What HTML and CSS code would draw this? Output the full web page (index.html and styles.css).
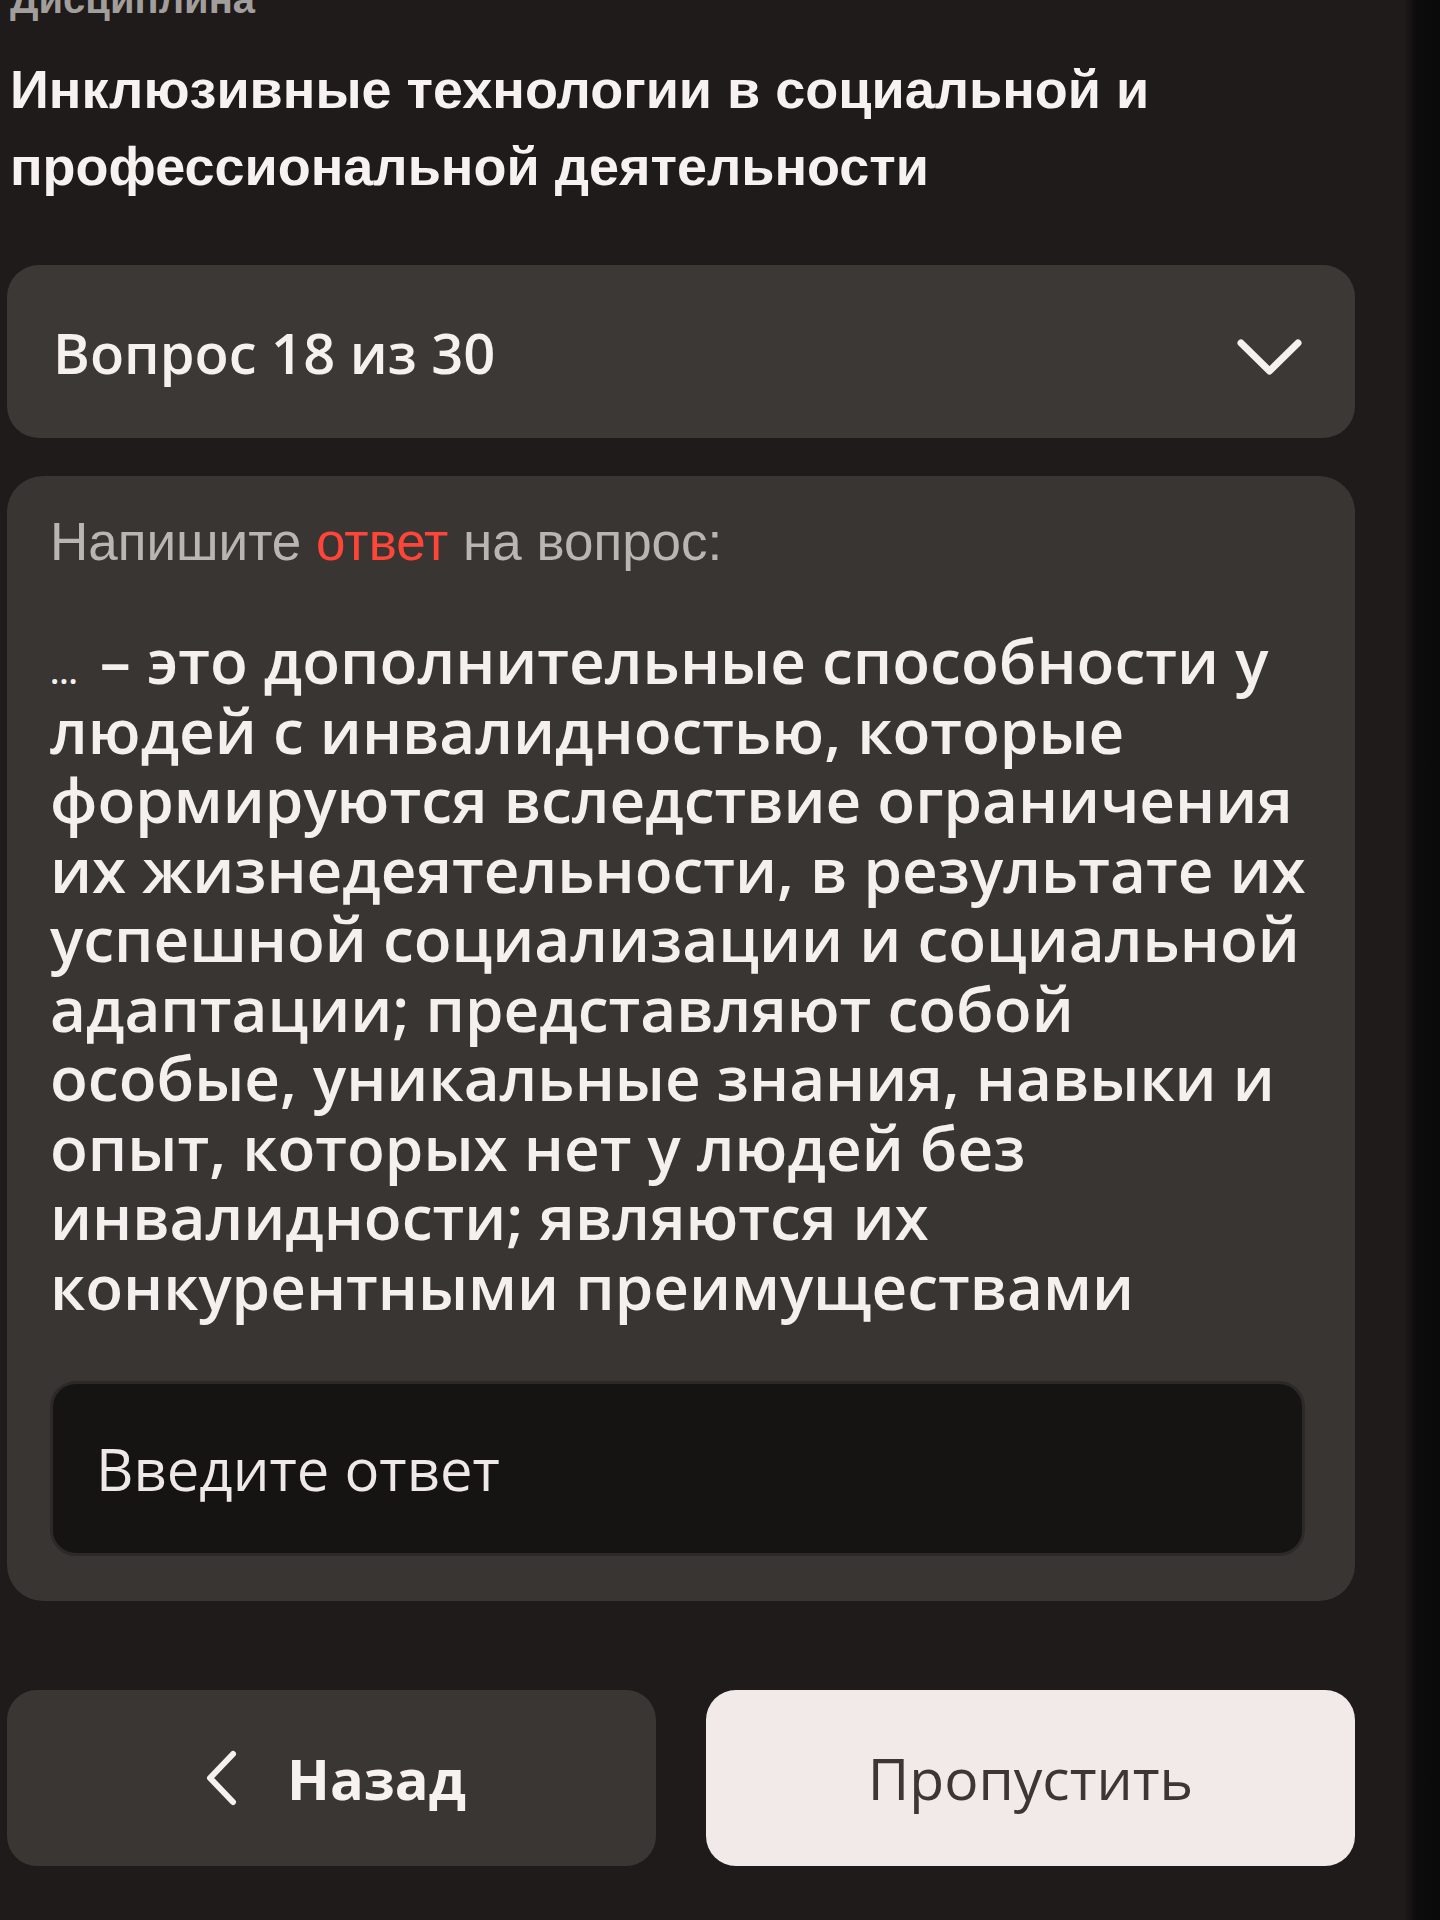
FILE: index.html
```html
<!DOCTYPE html>
<html lang="ru">
<head>
<meta charset="utf-8">
<title>Вопрос 18 из 30</title>
<link rel="stylesheet" href="styles.css">
</head>
<body>
<main class="page">
  <div class="label">Дисциплина</div>
  <h1 class="title">Инклюзивные технологии в социальной и<br>профессиональной деятельности</h1>

  <button class="question-select" type="button">
    <span class="question-select__text">Вопрос 18 из 30</span>
    <svg class="question-select__icon" width="67" height="38" viewBox="0 0 67 38" aria-hidden="true">
      <path d="M5 5 L33.5 33 L62 5" fill="none" stroke="#f6f1ef" stroke-width="7" stroke-linecap="round" stroke-linejoin="round"/>
    </svg>
  </button>

  <section class="card">
    <p class="hint">Напишите <span class="hint__accent">ответ</span> на вопрос:</p>
    <p class="question"><span class="question__gap">…</span> – это дополнительные способности у<br>людей с инвалидностью, которые<br>формируются вследствие ограничения<br>их жизнедеятельности, в результате их<br>успешной социализации и социальной<br>адаптации; представляют собой<br>особые, уникальные знания, навыки и<br>опыт, которых нет у людей без<br>инвалидности; являются их<br>конкурентными преимуществами</p>
    <input class="answer" type="text" placeholder="Введите ответ">
  </section>

  <div class="actions">
    <button class="btn btn--back" type="button">
      <svg class="btn__icon" width="32" height="56" viewBox="0 0 32 56" aria-hidden="true">
        <path d="M28 4 L5 28 L28 52" fill="none" stroke="#f6f1ef" stroke-width="6" stroke-linecap="round" stroke-linejoin="round"/>
      </svg>
      <span>Назад</span>
    </button>
    <button class="btn btn--skip" type="button">Пропустить</button>
  </div>
</main>
</body>
</html>
```

FILE: styles.css
```css
* {
  box-sizing: border-box;
}

html,
body {
  margin: 0;
  padding: 0;
}

body {
  min-height: 1920px;
  background: linear-gradient(to right, #1e1b1a 0, #1e1b1a 1404px, #0d0c0c 1416px, #0b0a0a 100%);
  color: #f5f0ee;
  font-family: "Open Sans", "Liberation Sans", sans-serif;
  overflow: hidden;
}

.page {
  width: 1348px;
  margin-left: 7px;
  display: flex;
  flex-direction: column;
}

.label {
  margin: -21px 0 0 3px;
  height: 40px;
  font-family: "Liberation Sans", Arial, sans-serif;
  font-weight: 700;
  font-size: 40px;
  line-height: 40px;
  color: #a29e9b;
}

.title {
  margin: 32px 0 0 3px;
  font-family: "Liberation Sans", Arial, sans-serif;
  font-weight: 700;
  font-size: 54px;
  line-height: 77px;
  color: #f7f2f0;
  white-space: nowrap;
}

.question-select {
  margin-top: 60px;
  height: 173px;
  padding: 0 52px 0 46px;
  border: 0;
  border-radius: 32px;
  background: #3c3835;
  display: flex;
  align-items: center;
  justify-content: space-between;
  font-family: "Open Sans", sans-serif;
  font-weight: 600;
  font-size: 56px;
  color: #f6f1ef;
  text-align: left;
}

.question-select__icon {
  display: block;
  flex: none;
  margin-top: 10px;
}

.card {
  margin-top: 38px;
  padding: 36px 50px 45px 43px;
  border-radius: 36px;
  background: #393533;
  display: flex;
  flex-direction: column;
}

.hint {
  margin: 0;
  font-family: "Liberation Sans", Arial, sans-serif;
  font-size: 53px;
  line-height: 60px;
  color: #b9b5b2;
}

.hint__accent {
  color: #ff4538;
}

.question {
  margin: 54px 0 0;
  font-family: "Open Sans", sans-serif;
  font-weight: 600;
  font-size: 62px;
  line-height: 69.5px;
  color: #f5f0ee;
  white-space: nowrap;
}

.question__gap {
  font-size: 34px;
  line-height: 0;
  margin-right: 6px;
}

.answer {
  margin-top: 60px;
  height: 175px;
  width: 100%;
  padding: 0 43px;
  border: 3px solid #2c2928;
  border-radius: 26px;
  background: #161413;
  font-family: "Open Sans", sans-serif;
  font-weight: 500;
  font-size: 58px;
  color: #eee9e7;
  outline: none;
}

.answer::placeholder {
  color: #eee9e7;
  opacity: 1;
}

.actions {
  margin-top: 89px;
  display: grid;
  grid-template-columns: 1fr 1fr;
  gap: 50px;
}

.btn {
  height: 176px;
  border: 0;
  border-radius: 30px;
  display: flex;
  align-items: center;
  justify-content: center;
  font-family: "Open Sans", sans-serif;
}

.btn--back {
  gap: 50px;
  padding-left: 14px;
  background: #3a3634;
  color: #f7f2f0;
  font-weight: 700;
  font-size: 56px;
}

.btn__icon {
  display: block;
}

.btn--skip {
  background: #f1eae8;
  color: #3d3635;
  font-weight: 400;
  font-size: 57px;
}
```
